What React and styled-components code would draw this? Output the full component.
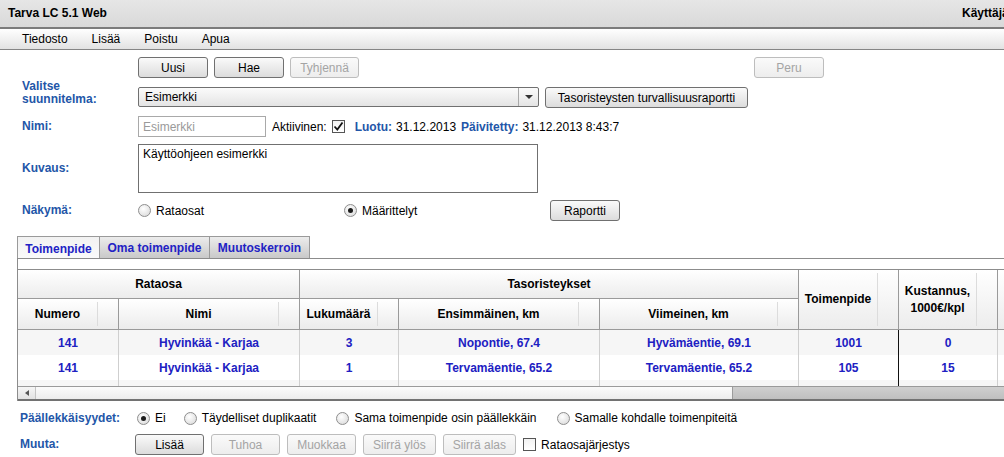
import React from 'react';
import styled, { createGlobalStyle, css } from 'styled-components';

const GlobalStyle = createGlobalStyle`
  html, body {
    margin: 0;
    padding: 0;
    background: #fff;
  }
  body {
    font-family: "Liberation Sans", Arial, sans-serif;
    font-size: 12px;
    color: #000;
    overflow: hidden;
  }
  * {
    box-sizing: border-box;
  }
`;

const Page = styled.div`
  width: 1004px;
  height: 457px;
  overflow: hidden;
`;

const TitleBar = styled.div`
  height: 29px;
  display: flex;
  align-items: center;
  padding-left: 8px;
  padding-bottom: 1px;
  background: linear-gradient(#e6e6e6, #d9d9d9);
  border-bottom: 2px solid #7c7c7c;
  font-weight: bold;
`;

const UserName = styled.span`
  flex: none;
  width: 60px;
  margin-left: auto;
  margin-right: -18px;
  white-space: nowrap;
`;

const MenuBar = styled.div`
  height: 21px;
  display: flex;
  align-items: center;
  padding-left: 10px;
  background: linear-gradient(#ffffff, #e2e2e2);
  border-bottom: 1px solid #858585;
`;

const MenuItem = styled.span`
  padding: 0 12px;
`;

const Form = styled.div`
  padding-top: 7px;
`;

const Row = styled.div`
  display: flex;
  align-items: ${(p) => p.$align || 'center'};
  margin-top: ${(p) => p.$top || 0}px;
  white-space: nowrap;
`;

const Label = styled.div`
  flex: none;
  width: ${(p) => p.$w || 138}px;
  padding-left: ${(p) => p.$left || 22}px;
  color: #2356a8;
  font-weight: bold;
  line-height: 13px;
`;

const Button = styled.button`
  height: 21px;
  min-width: ${(p) => p.$w || 69}px;
  margin-left: ${(p) => p.$ml || 0}px;
  margin-top: ${(p) => p.$mt || 0}px;
  padding: 0 9px;
  border: 1px solid #707070;
  border-radius: 3px;
  background: linear-gradient(#fafafa, #dcdcdc);
  font-family: inherit;
  font-size: 12px;
  color: #000;

  &:disabled {
    color: #a4a4a4;
    border-color: #bdbdbd;
    background: linear-gradient(#fafafa, #ededed);
  }
`;

const ButtonGroup = styled.div`
  display: flex;
  gap: ${(p) => p.$gap || 6}px;
  align-items: center;
`;

const Select = styled.div`
  width: 401px;
  height: 20px;
  margin-top: 7px;
  display: flex;
  align-items: center;
  border: 1px solid #707070;
  border-radius: 2px;
  background: linear-gradient(#fbfbfb, #e4e4e4);
`;

const SelectText = styled.span`
  flex: 1;
  padding-left: 6px;
`;

const SelectArrow = styled.span`
  width: 20px;
  height: 100%;
  display: flex;
  align-items: center;
  justify-content: center;
  border-left: 1px solid #a8a8a8;

  &::after {
    content: '';
    border-left: 4px solid transparent;
    border-right: 4px solid transparent;
    border-top: 4px solid #333;
  }
`;

const TextInput = styled.div`
  width: 128px;
  height: 21px;
  display: flex;
  align-items: center;
  padding-left: 4px;
  border: 1px solid #a9a9a9;
  color: #9a9a9a;
`;

const TextArea = styled.div`
  width: 400px;
  height: 49px;
  padding: 2px 4px;
  border: 1px solid #707070;
`;

const Inline = styled.span`
  margin-left: ${(p) => p.$ml || 0}px;
`;

const InfoKey = styled.span`
  color: #2356a8;
  font-weight: bold;
  margin-left: ${(p) => p.$ml || 0}px;
`;

const Check = styled.span`
  flex: none;
  width: 13px;
  height: 13px;
  margin: 0 ${(p) => p.$mr || 5}px 0 ${(p) => p.$ml || 0}px;
  display: inline-flex;
  align-items: center;
  justify-content: center;
  border: 1px solid #555;
  background: linear-gradient(#f2f2f2, #fff);
`;

const RadioDot = styled.span`
  flex: none;
  width: 13px;
  height: 13px;
  margin-right: 5px;
  border-radius: 50%;
  border: 1px solid #8e8e8e;
  display: inline-flex;
  align-items: center;
  justify-content: center;
  background: radial-gradient(circle at 40% 35%, #ffffff, #d6d6d6);

  ${(p) => p.$on && css`
    &::after {
      content: '';
      width: 5px;
      height: 5px;
      border-radius: 50%;
      background: #1c1c1c;
    }
  `}
`;

const Option = styled.label`
  display: inline-flex;
  align-items: center;
  width: ${(p) => (p.$w ? `${p.$w}px` : 'auto')};
  margin-right: ${(p) => p.$mr || 0}px;
`;

const TabStrip = styled.div`
  display: flex;
  margin: 15px 0 0 17px;
`;

const Tab = styled.div`
  width: ${(p) => p.$w}px;
  height: 22px;
  display: flex;
  align-items: center;
  justify-content: center;
  border: 1px solid #9a9a9a;
  border-bottom: none;
  border-left: ${(p) => (p.$first ? '1px solid #9a9a9a' : 'none')};
  color: #2222c4;
  font-weight: bold;
  background: ${(p) => (p.$active ? 'linear-gradient(#f2f2f2, #fafafa)' : 'linear-gradient(#ececec, #c9c9c9)')};
  padding-top: ${(p) => (p.$active ? 2 : 0)}px;
`;

const Panel = styled.div`
  margin-left: 17px;
  padding-top: 10px;
  border-top: 1px solid #8c8c8c;
  border-left: 1px solid #8c8c8c;
`;

const TableWrap = styled.div`
  border-top: 1px solid #8c8c8c;
  border-bottom: 2px solid #727272;
  overflow: hidden;
`;

const Grid = styled.table`
  table-layout: fixed;
  border-collapse: separate;
  border-spacing: 0;
  width: 1080px;
`;

const HeadCell = styled.th`
  position: relative;
  height: ${(p) => p.$h}px;
  padding: 0 ${(p) => (p.$grip ? 21 : 0)}px 0 0;
  background: linear-gradient(#ffffff, #ececec);
  border-right: 1px solid #9a9a9a;
  border-bottom: 1px solid #9a9a9a;
  font-weight: bold;
  text-align: center;
  line-height: 17px;

  ${(p) => p.$grip && css`
    &::after {
      content: '';
      position: absolute;
      top: 3px;
      bottom: 3px;
      right: 20px;
      width: 1px;
      background: #dcdcdc;
    }
  `}
`;

const Cell = styled.td`
  height: ${(p) => p.$h || 25}px;
  padding: 0;
  text-align: center;
  color: #2020c2;
  font-weight: bold;
  background: ${(p) => (p.$alt ? '#ffffff' : '#f6f6f6')};
  border-right: 1px solid ${(p) => (p.$dark ? '#111' : '#cfcfcf')};
`;

const ScrollBar = styled.div`
  height: 13px;
  display: flex;
  border-top: 1px solid #9a9a9a;
`;

const ScrollArrow = styled.div`
  width: 18px;
  display: flex;
  align-items: center;
  justify-content: center;
  background: linear-gradient(#f6f6f6, #e2e2e2);
  border-right: 1px solid #c4c4c4;

  &::after {
    content: '';
    border-top: 3px solid transparent;
    border-bottom: 3px solid transparent;
    border-right: 4px solid #555;
  }
`;

const ScrollTrack = styled.div`
  width: 697px;
  background: linear-gradient(#fbfbfb, #ececec);
  border-right: 1px solid #9c9c9c;
`;

const ScrollThumb = styled.div`
  flex: 1;
  background: linear-gradient(#cfcfcf, #bfbfbf);
`;

const CheckMark = () => (
  <svg width="11" height="11" viewBox="0 0 11 11">
    <path d="M1.5 5.5 L4.3 8.5 L9.5 1.5" fill="none" stroke="#111" strokeWidth="1.8" />
  </svg>
);

const rows = [
  ['141', 'Hyvinkää - Karjaa', '3', 'Nopontie, 67.4', 'Hyvämäentie, 69.1', '1001', '0'],
  ['141', 'Hyvinkää - Karjaa', '1', 'Tervamäentie, 65.2', 'Tervamäentie, 65.2', '105', '15'],
];

const widths = [101, 181, 99, 201, 199, 100, 99, 200];

const MeasureTable = () => (
  <TableWrap>
    <Grid>
      <colgroup>
        {widths.map((w, i) => <col key={i} style={{ width: w }} />)}
      </colgroup>
      <thead>
        <tr>
          <HeadCell $h={29} colSpan={2}>Rataosa</HeadCell>
          <HeadCell $h={29} colSpan={3}>Tasoristeykset</HeadCell>
          <HeadCell $h={60} rowSpan={2} $grip>Toimenpide</HeadCell>
          <HeadCell $h={60} rowSpan={2} $grip>Kustannus,<br />1000€/kpl</HeadCell>
          <HeadCell $h={60} rowSpan={2} />
        </tr>
        <tr>
          <HeadCell $h={31} $grip>Numero</HeadCell>
          <HeadCell $h={31} $grip>Nimi</HeadCell>
          <HeadCell $h={31} $grip>Lukumäärä</HeadCell>
          <HeadCell $h={31} $grip>Ensimmäinen, km</HeadCell>
          <HeadCell $h={31} $grip>Viimeinen, km</HeadCell>
        </tr>
      </thead>
      <tbody>
        {rows.map((r, ri) => (
          <tr key={ri}>
            {r.map((v, ci) => (
              <Cell key={ci} $alt={ri % 2 === 1} $dark={ci === 5}>{v}</Cell>
            ))}
            <Cell $alt={ri % 2 === 1} />
          </tr>
        ))}
        <tr>
          {widths.map((w, ci) => <Cell key={ci} $h={6} $dark={ci === 5} />)}
        </tr>
      </tbody>
    </Grid>
    <ScrollBar>
      <ScrollArrow />
      <ScrollTrack />
      <ScrollThumb />
    </ScrollBar>
  </TableWrap>
);

const App = () => (
  <Page>
    <GlobalStyle />
    <TitleBar>
      Tarva LC 5.1 Web
      <UserName>Käyttäjä:</UserName>
    </TitleBar>
    <MenuBar>
      <MenuItem>Tiedosto</MenuItem>
      <MenuItem>Lisää</MenuItem>
      <MenuItem>Poistu</MenuItem>
      <MenuItem>Apua</MenuItem>
    </MenuBar>

    <Form>
      <Row>
        <Label />
        <ButtonGroup>
          <Button $w={70}>Uusi</Button>
          <Button $w={70}>Hae</Button>
          <Button $w={69} disabled>Tyhjennä</Button>
        </ButtonGroup>
        <Button $w={70} $ml={395} disabled>Peru</Button>
      </Row>

      <Row $top={2} $align="flex-start">
        <Label>Valitse<br />suunnitelma:</Label>
        <Select>
          <SelectText>Esimerkki</SelectText>
          <SelectArrow />
        </Select>
        <Button $ml={6} $mt={7} $w={203}>Tasoristeysten turvallisuusraportti</Button>
      </Row>

      <Row $top={8}>
        <Label>Nimi:</Label>
        <TextInput>Esimerkki</TextInput>
        <Inline $ml={6}>Aktiivinen:</Inline>
        <Check $ml={5} $mr={10}><CheckMark /></Check>
        <InfoKey>Luotu:</InfoKey>
        <Inline $ml={4}>31.12.2013</Inline>
        <InfoKey $ml={5}>Päivitetty:</InfoKey>
        <Inline $ml={4}>31.12.2013 8:43:7</Inline>
      </Row>

      <Row $top={7}>
        <Label>Kuvaus:</Label>
        <TextArea>Käyttöohjeen esimerkki</TextArea>
      </Row>

      <Row $top={7}>
        <Label>Näkymä:</Label>
        <Option $w={206}><RadioDot />Rataosat</Option>
        <Option $w={206}><RadioDot $on />Määrittelyt</Option>
        <Button $w={70}>Raportti</Button>
      </Row>
    </Form>

    <TabStrip>
      <Tab $w={83} $first $active>Toimenpide</Tab>
      <Tab $w={110}>Oma toimenpide</Tab>
      <Tab $w={100}>Muutoskerroin</Tab>
    </TabStrip>
    <Panel>
      <MeasureTable />
    </Panel>

    <Row $top={9} style={{ height: 16 }}>
      <Label $w={137} $left={20}>Päällekkäisyydet:</Label>
      <Option $mr={18}><RadioDot $on />Ei</Option>
      <Option $mr={20}><RadioDot />Täydelliset duplikaatit</Option>
      <Option $mr={20}><RadioDot />Sama toimenpide osin päällekkäin</Option>
      <Option><RadioDot />Samalle kohdalle toimenpiteitä</Option>
    </Row>

    <Row $top={8}>
      <Label $w={135} $left={20}>Muuta:</Label>
      <ButtonGroup $gap={7}>
        <Button>Lisää</Button>
        <Button disabled>Tuhoa</Button>
        <Button disabled>Muokkaa</Button>
        <Button disabled>Siirrä ylös</Button>
        <Button disabled>Siirrä alas</Button>
      </ButtonGroup>
      <Check $ml={7} $mr={5} />
      <span>Rataosajärjestys</span>
    </Row>
  </Page>
);

export default App;
